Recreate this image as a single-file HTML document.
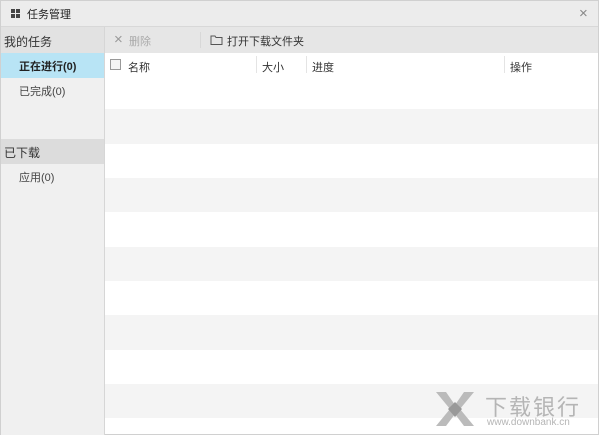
<html><head><style>
body{margin:0;width:600px;height:436px;overflow:hidden;background:#fff;font-family:"Liberation Sans","Noto Sans CJK SC",sans-serif;font-size:11px;color:#333}
.abs{position:absolute}
</style></head><body>
<div class="abs" style="left:0;top:0;width:599px;height:435px;border:1px solid #d0d0d0;box-sizing:border-box"></div>
<div class="abs" style="left:1px;top:1px;width:597px;height:25px;background:#ececec;border-bottom:1px solid #d8d8d8"></div>
<div class="abs" style="left:11px;top:9px;width:4px;height:4px;background:#444;box-shadow:5px 0 #444,0 5px #444,5px 5px #444"></div>
<div class="abs" style="left:27px;top:6px;font-size:11px;color:#222">任务管理</div>
<div class="abs" style="left:579px;top:5px;font-size:15px;color:#888">×</div>
<div class="abs" style="left:1px;top:27px;width:103px;height:408px;background:#f0f0f0;border-right:1px solid #d6d6d6"></div>
<div class="abs" style="left:1px;top:27px;width:103px;height:26px;background:#e2e2e2"></div>
<div class="abs" style="left:4px;top:33px;font-size:12px;color:#333">我的任务</div>
<div class="abs" style="left:1px;top:53px;width:103px;height:25px;background:#b8e4f5"></div>
<div class="abs" style="left:19px;top:58px;color:#222;font-weight:bold">正在进行(0)</div>
<div class="abs" style="left:19px;top:83px;color:#444">已完成(0)</div>
<div class="abs" style="left:1px;top:139px;width:103px;height:25px;background:#dcdcdc"></div>
<div class="abs" style="left:4px;top:144px;font-size:12px;color:#333">已下载</div>
<div class="abs" style="left:19px;top:169px;color:#444">应用(0)</div>
<div class="abs" style="left:105px;top:27px;width:493px;height:26px;background:#e6e6e6"></div>
<div class="abs" style="left:114px;top:31px;font-size:15px;color:#999">×</div>
<div class="abs" style="left:129px;top:33px;color:#aaa">删除</div>
<div class="abs" style="left:200px;top:32px;width:1px;height:16px;background:#d8d8d8"></div>
<svg class="abs" style="left:210px;top:34px" width="13" height="11"><path d="M1 2h4l1 1.5h6v7H1z" fill="none" stroke="#555"/></svg>
<div class="abs" style="left:227px;top:33px;color:#333">打开下载文件夹</div>
<div class="abs" style="left:105px;top:53px;width:493px;height:22px;background:#fff"></div>
<div class="abs" style="left:110px;top:59px;width:9px;height:9px;border:1px solid #999;background:#f4f4f4"></div>
<div class="abs" style="left:128px;top:59px">名称</div>
<div class="abs" style="left:256px;top:56px;width:1px;height:17px;background:#e4e4e4"></div>
<div class="abs" style="left:262px;top:59px">大小</div>
<div class="abs" style="left:306px;top:56px;width:1px;height:17px;background:#e4e4e4"></div>
<div class="abs" style="left:312px;top:59px">进度</div>
<div class="abs" style="left:504px;top:56px;width:1px;height:17px;background:#e4e4e4"></div>
<div class="abs" style="left:510px;top:59px">操作</div>
<div class="abs" style="left:105px;top:109px;width:493px;height:35px;background:#f4f4f4"></div>
<div class="abs" style="left:105px;top:178px;width:493px;height:34px;background:#f4f4f4"></div>
<div class="abs" style="left:105px;top:247px;width:493px;height:34px;background:#f4f4f4"></div>
<div class="abs" style="left:105px;top:315px;width:493px;height:35px;background:#f4f4f4"></div>
<div class="abs" style="left:105px;top:384px;width:493px;height:34px;background:#f4f4f4"></div>
<svg class="abs" style="left:434px;top:390px" width="42" height="38"><path d="M2 2h10l9 13 9-13h10L26 19l14 17H30l-9-12-9 12H2l14-17z" fill="#bbb"/><path d="M14 19l7 8 7-8-7-7z" fill="#999"/></svg>
<div class="abs" style="left:485px;top:390px;font-size:22px;color:#b5b5b5;letter-spacing:2px">下载银行</div>
<div class="abs" style="left:487px;top:417px;font-size:10px;color:#b5b5b5">www.downbank.cn</div>
</body></html>
